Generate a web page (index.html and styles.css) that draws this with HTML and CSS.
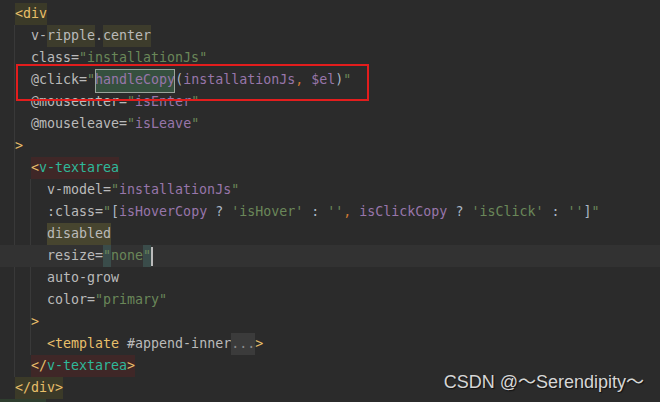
FILE: index.html
```html
<!DOCTYPE html>
<html lang="en">
<head>
    <meta charset="UTF-8">
    <meta name="viewport" content="width=device-width, initial-scale=1.0">
    <title>installationJs.vue</title>
    <link rel="stylesheet" href="styles.css">
</head>
<body>
    <div class="editor">
        <div class="line"><span class="t match-tag">&lt;div</span></div>
        <div class="block">
            <div class="line in1"><span class="a">v-</span><span class="a match">ripple</span><span class="a">.</span><span class="a match">center</span></div>
            <div class="line in1"><span class="a">class=</span><span class="s">"installationJs"</span></div>
            <div class="line in1 marked"><span class="a">@click=</span><span class="q">"</span><span class="v caret-word">handleCopy</span><span class="p">(</span><span class="v">installationJs</span><span class="c">,</span> <span class="v">$el</span><span class="p">)</span><span class="q">"</span></div>
            <div class="line in1"><span class="a">@mouseenter=</span><span class="q">"</span><span class="v">isEnter</span><span class="q">"</span></div>
            <div class="line in1"><span class="a">@mouseleave=</span><span class="q">"</span><span class="v">isLeave</span><span class="q">"</span></div>
            <div class="line"><span class="t">&gt;</span></div>
            <div class="line in1"><span class="pair-tag"><span class="t">&lt;</span><span class="tn">v-textarea</span></span></div>
            <div class="block inner">
                <div class="line in1"><span class="a">v-model=</span><span class="q">"</span><span class="v">installationJs</span><span class="q">"</span></div>
                <div class="line in1"><span class="a">:class=</span><span class="q">"</span><span class="p">[</span><span class="v">isHoverCopy</span><span class="p"> ? </span><span class="s">'isHover'</span><span class="p"> : </span><span class="s">''</span><span class="c">,</span> <span class="v">isClickCopy</span><span class="p"> ? </span><span class="s">'isClick'</span><span class="p"> : </span><span class="s">''</span><span class="p">]</span><span class="q">"</span></div>
                <div class="line in1"><span class="a usage">disabled</span></div>
                <div class="line in1 current"><span class="a">resize=</span><span class="s brace">"</span><span class="s">none</span><span class="s brace">"</span><span class="caret"></span></div>
                <div class="line in1"><span class="a">auto-grow</span></div>
                <div class="line in1"><span class="a">color=</span><span class="s">"primary"</span></div>
                <div class="line"><span class="t">&gt;</span></div>
                <div class="line in1"><span class="t">&lt;template</span> <span class="a">#append-inner</span><span class="fold">...</span><span class="t">&gt;</span></div>
            </div>
            <div class="line in1"><span class="pair-tag"><span class="t">&lt;/</span><span class="tn">v-textarea</span><span class="t">&gt;</span></span></div>
        </div>
        <div class="line"><span class="t match-tag">&lt;/div&gt;</span></div>
        <div class="line"><span class="next-mark"></span></div>

        <div class="watermark">CSDN @～Serendipity～</div>
    </div>
</body>
</html>
```

FILE: styles.css
```css
/* Editor */
* {
    margin: 0;
    padding: 0;
    box-sizing: border-box;
}

body {
    background: #2b2b2b;
    width: 660px;
    height: 402px;
    overflow: hidden;
}

.editor {
    position: relative;
    height: 402px;
    padding: 3px 0 0 15px;
    font-family: 'DejaVu Sans Mono', monospace;
    font-size: 13.3px;
    color: #bababa;
}

.line {
    height: 22px;
    line-height: 22px;
    white-space: pre;
}

.in1 {
    padding-left: 16px;
}

/* Indent guides */
.block {
    margin-left: -1px;
    border-left: 1px solid #393939;
}

.block.inner {
    margin-left: 15px;
}

/* Tokens */
.t { color: #e8bf6a; }
.tn { color: #2fb89a; }
.a { color: #bababa; }
.s { color: #6a8759; }
.q { color: #6a8759; }
.v { color: #9876aa; }
.p { color: #a9b7c6; }
.c { color: #cc7832; }

.match-tag {
    display: inline-block;
    height: 22px;
    background: #3b3a28;
}

.match {
    display: inline-block;
    height: 22px;
    background: #3d3c2c;
}

.usage {
    display: inline-block;
    height: 22px;
    background: #47452f;
}

.pair-tag {
    display: inline-block;
    height: 22px;
    background: #3f2727;
}

.brace {
    display: inline-block;
    height: 22px;
    background: #3a4c4a;
}

.fold {
    display: inline-block;
    height: 22px;
    background: #3b3b3b;
    color: #8a8a8a;
}

.caret {
    display: inline-block;
    width: 2px;
    height: 19px;
    vertical-align: middle;
    background: #bbbbbb;
}

.current {
    margin-left: -31px;
    padding-left: 47px;
    background: #323232;
}

.caret-word {
    display: inline-block;
    height: 24px;
    line-height: 22px;
    vertical-align: top;
    background: #36503f;
    outline: 1px solid #9aa59c;
    outline-offset: -1px;
}

/* Red annotation box */
.marked {
    position: relative;
}

.marked::after {
    content: '';
    position: absolute;
    left: 1px;
    top: -5px;
    width: 349px;
    height: 33px;
    border: 2px solid #e31d1d;
}

.next-mark {
    display: inline-block;
    width: 46px;
    height: 4px;
    margin-left: -15px;
    vertical-align: top;
    background: #2f3e2f;
}

/* Watermark */
.watermark {
    position: absolute;
    right: 16px;
    bottom: 9px;
    font-family: 'Liberation Sans', 'Noto Sans CJK SC', sans-serif;
    font-size: 18px;
    color: #d6d6d6;
    text-shadow: 1px 1px 1px #111111;
}
```
